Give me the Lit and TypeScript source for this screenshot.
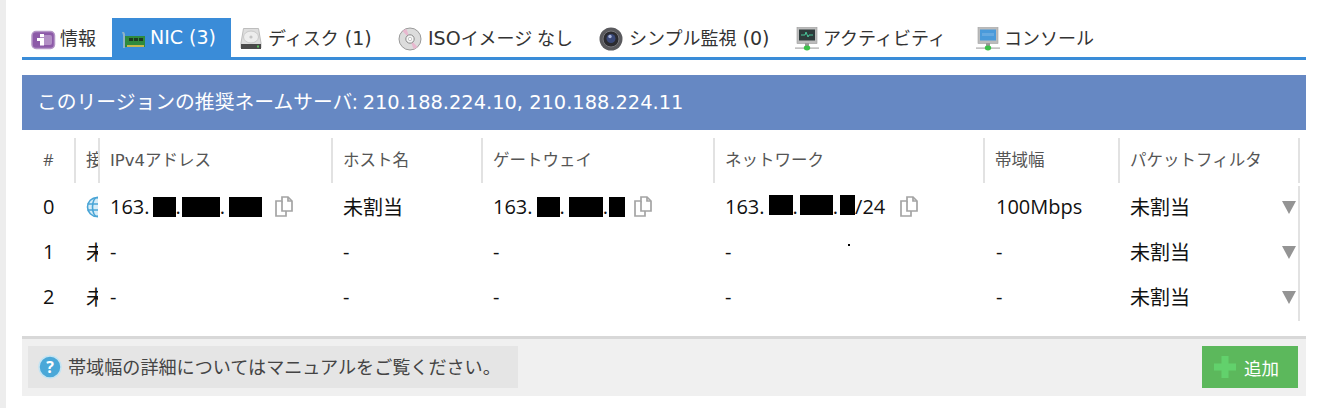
import { LitElement, html, css, svg } from "lit";
import { customElement } from "lit/decorators.js";

const icons: Record<string, unknown> = {
  info: svg`<svg width="26" height="24" viewBox="0 0 26 24"><rect x="2" y="4.5" width="22.5" height="17" rx="4" fill="#8d5aa8" stroke="#b597c6" stroke-width="1.5"/><rect x="10" y="8" width="12" height="10" rx="2" fill="#eadff0" opacity=".4"/><rect x="10" y="7" width="4" height="3" fill="#fff"/><path d="M7 11h7v7.5h-4V14H7z" fill="#fff"/></svg>`,
  nic: svg`<svg width="26" height="24" viewBox="0 0 26 24"><path d="M2 5h2l1 2v14H3V8z" fill="#8fb2c6"/><rect x="5" y="9" width="20" height="11" fill="#2f8a3e"/><rect x="9" y="11" width="4" height="3" fill="#1d3a24"/><rect x="14" y="11" width="4" height="3" fill="#1d3a24"/><rect x="19" y="11" width="4" height="3" fill="#1d3a24"/><path d="M7 18h17v2H7z" fill="#c8b84c"/></svg>`,
  disk: svg`<svg width="24" height="24" viewBox="0 0 24 24"><path d="M4.5 1.5h15L22 16v5H2v-5z" fill="#dedede" stroke="#bdbdbd"/><ellipse cx="12" cy="10" rx="7.5" ry="6" fill="#ededed" stroke="#c9c9c9"/><circle cx="12" cy="10" r="1.6" fill="#c4c4c4"/><rect x="2" y="17" width="20" height="5" fill="#4a4a4a"/><rect x="18" y="18.5" width="2" height="2" fill="#5fbf5f"/></svg>`,
  cd: svg`<svg width="24" height="24" viewBox="0 0 24 24"><circle cx="12" cy="12" r="11" fill="#dcdcdc" stroke="#9a9a9a"/><path d="M12 12 4.5 4A11 11 0 0 1 8.5 2zM12 12l7.5 8a11 11 0 0 1-4 2z" fill="#e8b8cf"/><circle cx="12" cy="12" r="4.2" fill="#f6f6f6" stroke="#888"/><circle cx="12" cy="12" r="1.7" fill="#fff" stroke="#aaa" stroke-width=".6"/></svg>`,
  cam: svg`<svg width="24" height="24" viewBox="0 0 24 24"><circle cx="12" cy="12" r="11.5" fill="#5a5a5e"/><circle cx="12" cy="12" r="8" fill="#2b2b30" stroke="#77777c"/><circle cx="12" cy="11.5" r="4.5" fill="#3a4878"/><circle cx="11" cy="9.5" r="1.7" fill="#a8b4d8"/></svg>`,
  act: svg`<svg width="24" height="24" viewBox="0 0 24 24"><rect x="2" y="0.5" width="20" height="16" fill="#bcbcbc" stroke="#999" stroke-width=".6"/><rect x="4" y="2.5" width="16" height="11" fill="#2e3b3b"/><path d="M6 8h4l1-3 2 5 1-2h4" fill="none" stroke="#48c79a" stroke-width="1"/><rect x="10" y="16" width="4" height="4" fill="#999"/><rect x="0" y="20.5" width="24" height="1.2" fill="#aaa"/><ellipse cx="12" cy="21" rx="3.2" ry="2.4" fill="#3cc04a"/></svg>`,
  con: svg`<svg width="24" height="24" viewBox="0 0 24 24"><rect x="2" y="0.5" width="20" height="16" fill="#bcbcbc" stroke="#a0a0a0" stroke-width=".6"/><rect x="4" y="2.5" width="16" height="11" fill="#4a9ada"/><path d="M6 6h12v3H6z" fill="#66a9e0"/><rect x="10" y="16" width="4" height="4" fill="#999"/><rect x="0" y="20.5" width="24" height="1.2" fill="#aaa"/><ellipse cx="12" cy="21" rx="3.2" ry="2.4" fill="#3cc04a"/></svg>`,
};

const copyIcon = (ml: number) => html`<svg style="margin-left:${ml}px" class="copy" width="20" height="21" viewBox="0 0 20 21" fill="#fff" stroke="#a4a4a4" stroke-width="1.7"><path d="M8 1h6l4 4v10H8z"/><path d="M14 1v4h4" fill="none"/><path d="M8 5H2v15h10v-5" fill="#fff"/><path d="M8 5v10h4" fill="none"/></svg>`;

const l = (s: string) => html`<span class="l">${s}</span>`;

const tabs = [
  { icon: "info", label: html`情報`, w: 90, gap: 4 },
  { icon: "nic", label: l("NIC (3)"), w: 119, gap: 4, active: true },
  { icon: "disk", label: html`ディスク${l(" (1)")}`, w: 159, gap: 5 },
  { icon: "cd", label: html`${l("ISO")}イメージ なし`, w: 201, gap: 6 },
  { icon: "cam", label: html`シンプル監視${l(" (0)")}`, w: 196, gap: 6 },
  { icon: "act", label: html`アクティビティ`, w: 181, gap: 4 },
  { icon: "con", label: html`コンソール`, w: 130, gap: 4 },
];

const heads = [html`#`, html`接続`, html`${l("IPv4")}アドレス`, html`ホスト名`, html`ゲートウェイ`, html`ネットワーク`, html`帯域幅`, html`パケットフィルタ`];

@customElement("app-root")
export class AppRoot extends LitElement {
  static styles = css`
    :host { display: block; width: 1318px; height: 408px; overflow: hidden; background: #fff;
      font-family: "Open Sans", "Noto Sans CJK JP", sans-serif; color: #111; }
    .page { box-sizing: border-box; height: 408px; border-left: 6px solid #ededed; padding: 18px 12px 0 16px; position: relative; }
    .tabs { display: flex; box-sizing: border-box; height: 42px; border-bottom: 3px solid #3a8cd8; }
    .tab { display: flex; align-items: center; box-sizing: border-box; padding: 0 0 0 8px; font-size: 18px; color: #333; white-space: pre; }
    .tab svg { flex: none; margin-top: 3px; }
    .tab span.t { margin-top: -2px; }
    .tab .l { font-family: "DejaVu Sans", sans-serif; font-size: 19px; }
    .tab.active { background: #3a8cd8; color: #fff; }
    .banner { margin-top: 15px; height: 55px; box-sizing: border-box; background: #6688c3; color: #fff; display: flex; align-items: center; padding: 0 0 4px 15px; font-size: 19.8px; white-space: pre; }
    .banner .l { font-family: "DejaVu Sans", sans-serif; font-size: 19.4px; }
    .grid { display: grid; grid-template-columns: 52px 24px 233px 150px 232px 270px 135px 182px; }
    .head { margin-top: 8px; height: 45px; }
    .th { box-sizing: border-box; border-left: 2px solid #e2e2e2; font-size: 16.5px; color: #555; padding-left: 10px; line-height: 43px; white-space: nowrap; overflow: hidden; }
    .th .l { font-family: "DejaVu Sans", sans-serif; }
    .th:first-child { border-left: 0; padding-left: 21px; }
    .th:last-child { border-right: 2px solid #e2e2e2; }
    .body { margin-top: 3px; height: 135px; width: 1278px; box-sizing: border-box; border-right: 2px solid #e2e2e2; grid-template-columns: 52px 24px 233px 150px 232px 270px 135px 180px; grid-auto-rows: 45px; }
    .td { display: flex; align-items: center; box-sizing: border-box; padding: 0 0 4px 12px; font-size: 20px; white-space: nowrap; overflow: hidden; position: relative; color: #111; }
    .td.num { padding-left: 21px; }
    .td.b { padding-left: 13px; }
    .r { display: inline-block; background: #000; height: 20px; flex: none; }
    .r.up { margin-bottom: 4px; }
    .copy { flex: none; }
    .tri { position: absolute; right: 2px; top: 15px; width: 0; height: 0; border-left: 7.5px solid transparent; border-right: 7.5px solid transparent; border-top: 13px solid #949494; }
    .dot { position: absolute; left: 842px; top: 244px; width: 2px; height: 2px; background: #000; }
    .foot { margin-top: 15px; width: 1284px; border-top: 3px solid #d8d8d8; background: #f0f0f0; display: flex; justify-content: space-between; align-items: flex-start; padding: 7px 8px 8px 6px; box-sizing: border-box; height: 60px; }
    .note { width: 490px; height: 42px; background: #e5e5e5; display: flex; align-items: center; gap: 6px; padding: 0 0 2px 10px; box-sizing: border-box; font-size: 18.1px; color: #444; white-space: nowrap; }
    .add { width: 96px; height: 42px; background: #5cb85c; color: #fff; display: flex; align-items: center; justify-content: center; gap: 8px; font-size: 17.5px; box-sizing: border-box; border: 0; font-family: inherit; padding: 0 7px 0 0; }
  `;

  private row(i: number, conn: unknown, cells: unknown[]) {
    return html`
      <div class="td num">${i}</div>
      <div class="td">${conn}</div>
      ${cells.map((c, j) => html`<div class="td ${j === 4 ? "b" : ""}">${c}</div>`)}
    `;
  }

  render() {
    const r = (w: number, m: number, up = false) => html`<span class="r ${up ? "up" : ""}" style="width:${w}px;margin-left:${m}px"></span>`;
    const globe = html`<svg width="22" height="22" viewBox="0 0 22 22" style="flex:none" fill="none" stroke="#4aa5d6" stroke-width="1.6"><circle cx="11" cy="11" r="9.5" fill="#d7edf8"/><ellipse cx="11" cy="11" rx="4.5" ry="9.5"/><path d="M1.5 8h19M1.5 14h19"/></svg>`;
    const un = html`<span>未割当</span>`;
    return html`
      <div class="page">
        <div class="tabs">
          ${tabs.map((t) => html`<div class="tab ${t.active ? "active" : ""}" style="width:${t.w}px;gap:${t.gap}px">${icons[t.icon]}<span class="t">${t.label}</span></div>`)}
        </div>
        <div class="banner"><span>このリージョンの推奨ネームサーバ: <span class="l">210.188.224.10, 210.188.224.11</span></span></div>
        <div class="grid head">${heads.map((h) => html`<div class="th">${h}</div>`)}</div>
        <div class="grid body">
          ${this.row(0, globe, [
            html`163.${r(23, 3)}.${r(38, 1)}.${r(33, 4)}${copyIcon(12)}`,
            un,
            html`163.${r(23, 4)}.${r(34, 4)}.${r(16, 1)}${copyIcon(8)}`,
            html`163.${r(24, 4, true)}.${r(33, 2, true)}.${r(15, 2, true)}/24${copyIcon(14)}`,
            "100Mbps",
            html`${un}<i class="tri"></i>`,
          ])}
          ${[1, 2].map((i) =>
            this.row(i, html`<span>未割当</span>`, ["-", "-", "-", "-", "-", html`${un}<i class="tri"></i>`])
          )}
        </div>
        <div class="foot">
          <div class="note">
            <svg width="24" height="24" viewBox="0 0 24 24" style="margin-top:2px"><circle cx="12" cy="12" r="11" fill="#4aa8d8" stroke="#c4e4f3" stroke-width="1.5"/><text x="12" y="17.5" text-anchor="middle" font-size="16" font-weight="700" fill="#fff" font-family="Open Sans">?</text></svg>
            <span>帯域幅の詳細についてはマニュアルをご覧ください。</span>
          </div>
          <button class="add">
            <svg width="22" height="22" viewBox="0 0 22 22"><path d="M7.5 0h7v7.5H22v7h-7.5V22h-7v-7.5H0v-7h7.5z" fill="#62d16c"/></svg>
            <span>追加</span>
          </button>
        </div>
        <span class="dot"></span>
      </div>
    `;
  }
}
